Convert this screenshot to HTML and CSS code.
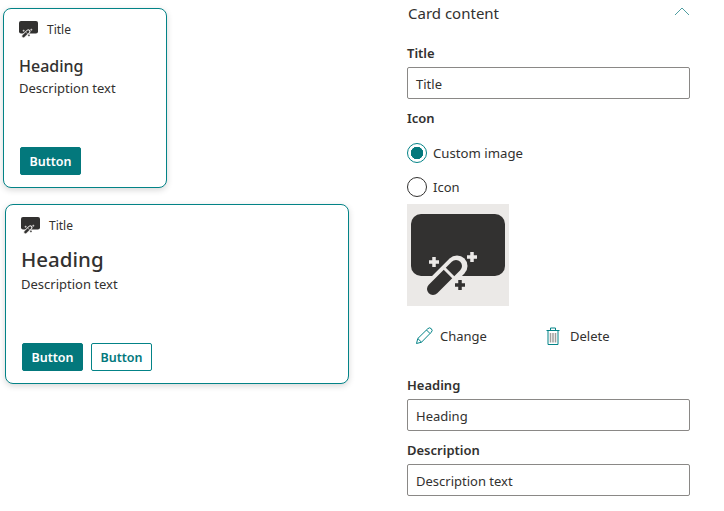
FILE: index.html
```html
<!DOCTYPE html>
<html lang="en">
<head>
    <meta charset="UTF-8">
    <title>Card designer</title>
    <link rel="stylesheet" href="styles.css">
</head>
<body>
    <svg class="defs" width="0" height="0">
        <symbol id="card-icon" viewBox="0 0 94 84">
            <path fill="#323130" d="M10 0H84A10 10 0 0 1 94 10V52A10 10 0 0 1 84 62H10A10 10 0 0 1 0 52V10A10 10 0 0 1 10 0Z"/>
            <path fill="none" stroke="#ebe9e7" stroke-width="21" stroke-linecap="round" d="M22 76L46 52"/>
            <path fill="none" stroke="#323130" stroke-width="12" stroke-linecap="round" d="M22 75L45 52"/>
            <path fill="none" stroke="#ebe9e7" stroke-width="3" d="M32 53L44 65"/>
            <path fill="none" stroke="#ebe9e7" stroke-width="3.500" d="M18 48h10M23 43v10M56 43h10M61 38v10"/>
            <path fill="none" stroke="#323130" stroke-width="3.500" d="M44 71h10M49 66v10"/>
        </symbol>
    </svg>

    <div class="preview">
        <div class="card card-small">
            <div class="card-top">
                <svg class="card-icon"><use href="#card-icon"/></svg>
                <span class="card-title">Title</span>
            </div>
            <div class="card-heading">Heading</div>
            <div class="card-desc">Description text</div>
            <div class="card-actions">
                <button class="btn btn-primary">Button</button>
            </div>
        </div>

        <div class="card card-large">
            <div class="card-top">
                <svg class="card-icon"><use href="#card-icon"/></svg>
                <span class="card-title">Title</span>
            </div>
            <div class="card-heading">Heading</div>
            <div class="card-desc">Description text</div>
            <div class="card-actions">
                <button class="btn btn-primary">Button</button>
                <button class="btn btn-outline">Button</button>
            </div>
        </div>
    </div>

    <div class="panel">
        <div class="panel-head">
            <span>Card content</span>
            <svg class="chevron" width="16" height="9" viewBox="0 0 16 9"><path d="M1 8L8 1L15 8" fill="none" stroke="#4f9ea1" stroke-width="1"/></svg>
        </div>

        <label class="field-label label-title">Title</label>
        <div class="text-input">Title</div>

        <label class="field-label label-icon">Icon</label>
        <div class="radio-row radio-first">
            <span class="radio radio-on"></span>
            <span>Custom image</span>
        </div>
        <div class="radio-row">
            <span class="radio"></span>
            <span>Icon</span>
        </div>

        <div class="image-box">
            <svg class="image-icon"><use href="#card-icon"/></svg>
        </div>

        <div class="image-actions">
            <span class="image-action action-change">
                <svg width="18" height="18" viewBox="0 0 18 18">
                    <path d="M1.500 16.500L2.800 11.500L12.800 1.700A2 2 0 0 1 16.300 5.200L6.500 15.200Z M11.500 3L15 6.500 M2.800 11.500L6.500 15.200" fill="none" stroke="#038387" stroke-width="1"/>
                </svg>
                Change
            </span>
            <span class="image-action action-delete">
                <svg width="14" height="18" viewBox="0 0 14 18">
                    <path d="M0.500 3.500H13.500 M2 3.500V17.500H12V3.500 M4.500 3.500V1H9.500V3.500" fill="none" stroke="#038387" stroke-width="1"/>
                    <path d="M4.500 6V15.500 M7 6V15.500 M9.500 6V15.500" fill="none" stroke="#a19f9d" stroke-width="1.500"/>
                </svg>
                Delete
            </span>
        </div>

        <label class="field-label label-heading">Heading</label>
        <div class="text-input">Heading</div>

        <label class="field-label label-desc">Description</label>
        <div class="text-input">Description text</div>
    </div>
</body>
</html>
```

FILE: styles.css
```css
body {
    margin: 0;
    display: flex;
    align-items: flex-start;
    font-family: "Noto Sans", "Open Sans", sans-serif;
    font-size: 14px;
    color: #323130;
    background: white;
}
.defs {
    position: absolute;
}
.preview {
    width: 407px;
    flex-shrink: 0;
    padding: 8px 0 0 3px;
    box-sizing: border-box;
}
.card {
    display: flex;
    flex-direction: column;
    height: 180px;
    box-sizing: border-box;
    padding: 11px 15px 12px 15px;
    border: 1px solid #038387;
    border-radius: 8px;
    background: white;
    box-shadow: 0 2px 6px rgba(0,0,0,0.16);
}
.card-small {
    width: 164px;
    margin-bottom: 16px;
}
.card-large {
    width: 344px;
    margin-left: 2px;
}
.card-top {
    display: flex;
    align-items: center;
    height: 18px;
}
.card-icon {
    width: 19px;
    height: 17px;
    margin-right: 9px;
}
.card-title {
    font-size: 12px;
}
.card-heading {
    font-weight: 500;
    margin-top: 16px;
}
.card-small .card-heading {
    font-size: 16px;
    line-height: 24px;
}
.card-large .card-heading {
    font-size: 20.500px;
    line-height: 28px;
    margin-top: 11px;
}
.card-desc {
    font-size: 13px;
    line-height: 20px;
}
.card-large .card-desc {
    margin-top: 1px;
}
.card-actions {
    display: flex;
    gap: 7px;
    margin-top: auto;
}
.btn {
    width: 61px;
    height: 28px;
    padding: 0;
    border-radius: 2px;
    font-family: inherit;
    font-size: 12.500px;
    font-weight: 600;
    box-sizing: border-box;
}
.card-actions .btn {
    margin-left: 1px;
}
.btn-primary {
    background: #03787c;
    border: 1px solid #03787c;
    color: white;
}
.btn-outline {
    background: white;
    border: 1px solid #038387;
    color: #03787c;
}
.panel {
    width: 283px;
    flex-shrink: 0;
}
.panel-head {
    display: flex;
    justify-content: space-between;
    align-items: center;
    height: 26px;
    padding-left: 1px;
    font-size: 15px;
}
.chevron {
    margin-top: -3px;
}
.field-label {
    display: block;
    font-size: 13px;
    font-weight: 600;
    line-height: 20px;
}
.label-title {
    margin-top: 17px;
    margin-bottom: 4px;
}
.label-icon {
    margin-top: 9px;
}
.label-heading {
    margin-top: 29px;
    margin-bottom: 4px;
}
.label-desc {
    margin-top: 9px;
    margin-bottom: 4px;
}
.text-input {
    height: 32px;
    box-sizing: border-box;
    padding: 0 8px;
    line-height: 32px;
    font-size: 13px;
    border: 1px solid #8a8886;
    border-radius: 2px;
}
.radio-row {
    display: flex;
    align-items: center;
    gap: 6px;
    height: 20px;
    margin-top: 14px;
    font-size: 13px;
}
.radio-first {
    margin-top: 15px;
    font-size: 13.200px;
}
.radio {
    width: 20px;
    height: 20px;
    box-sizing: border-box;
    border: 1px solid #323130;
    border-radius: 50%;
}
.radio-on {
    border-color: #038387;
    background: radial-gradient(circle, #03787c 0 6px, white 6.500px);
}
.image-box {
    display: flex;
    align-items: flex-start;
    justify-content: center;
    width: 102px;
    height: 102px;
    margin-top: 7px;
    padding-top: 10px;
    box-sizing: border-box;
    background: #ebe9e7;
    overflow: hidden;
}
.image-icon {
    width: 94px;
    height: 84px;
}
.image-actions {
    display: flex;
    height: 20px;
    margin-top: 20px;
    font-size: 13px;
}
.image-action {
    display: flex;
    align-items: center;
    gap: 7px;
}
.action-change {
    margin-left: 8px;
    width: 131px;
}
.action-delete {
    gap: 10px;
}
```
